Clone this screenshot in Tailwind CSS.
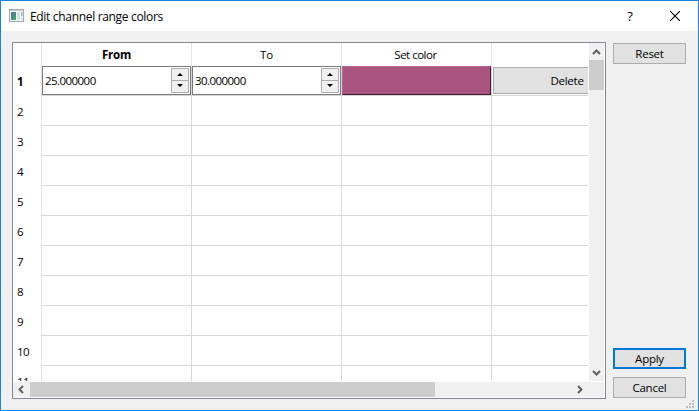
<!DOCTYPE html>
<html lang="en">
<head>
<meta charset="utf-8">
<title>Edit channel range colors</title>
<script src="https://cdn.jsdelivr.net/npm/@tailwindcss/browser@4"></script>
</head>
<body class="overflow-hidden">
<div class="flex h-[411px] w-[699px] flex-col border border-[#1883d7] bg-[#f0f0f0] font-['Open_Sans','Noto_Sans',sans-serif] text-[11.5px] leading-4 tracking-[-0.25px] text-black">
  <header class="flex h-[30px] shrink-0 items-center bg-white pl-2">
    <svg class="-mt-0.5 h-[13px] w-[15px] shrink-0" viewBox="0 0 15 13">
      <defs><linearGradient id="g" x1="0" y1="0" x2="1" y2="1"><stop offset="0" stop-color="#4773a8"/><stop offset="1" stop-color="#50a868"/></linearGradient></defs>
      <rect x=".5" y=".5" width="14" height="12" fill="#f4f4f4" stroke="#a3a9ae"/>
      <path d="M1 1.5h13" stroke="#c5ccd2"/>
      <rect x="2" y="3" width="5" height="8" fill="url(#g)"/>
      <rect x="8" y="3" width="3" height="8" fill="#d3e0e4"/>
      <rect x="12" y="3" width="1.5" height="4" fill="#9bbca9"/>
      <rect x="12" y="8" width="1.5" height="3" fill="#d6dfe6"/>
    </svg>
    <h1 class="ml-1.5 flex-1 pt-px text-[12px] tracking-[-0.32px] whitespace-nowrap">Edit channel range colors</h1>
    <span class="mr-[36px] w-2 pb-px text-center text-[13px] font-medium">?</span>
    <svg class="mr-[18px] h-[10px] w-[10px]" viewBox="0 0 10 10"><path d="M0 0L10 10M10 0L0 10" stroke="#000" stroke-width="1.1"/></svg>
  </header>
  <main class="flex min-h-0 flex-1 pt-[11px] pl-[11px]">
    <section class="flex h-[357px] w-[594px] shrink-0 flex-col border border-[#828790] bg-white">
      <div class="flex h-[338px]">
        <div class="h-[338px] w-[575px] overflow-hidden">
          <table class="w-[629px] table-fixed border-separate border-spacing-0">
            <colgroup><col class="w-[29px]"><col class="w-[150px]"><col class="w-[150px]"><col class="w-[150px]"><col class="w-[150px]"></colgroup>
            <thead>
              <tr class="h-[23px]">
                <th class="border-r border-[#e5e5e5] p-0"></th>
                <th class="border-r border-[#e5e5e5] p-0 font-bold">From</th>
                <th class="border-r border-[#e5e5e5] p-0 font-normal">To</th>
                <th class="border-r border-[#e5e5e5] p-0 pr-1 font-normal tracking-[-0.6px]"><span class="pl-0.5 tracking-[-0.5px]">Set color</span></th>
                <th class="p-0"></th>
              </tr>
            </thead>
            <tbody id="rows">
              <tr class="h-[30px]">
                <th class="border-r border-[#e5e5e5] p-0 pt-0.5 pl-1 text-left font-bold">1</th>
                <td class="border-r border-b border-[#d8d8d8] p-0">
                  <div class="flex h-[29px] items-center border border-[#7a7a7a] pr-px pl-0.5">
                    <span class="flex-1 tracking-[-0.55px]">25.000000</span>
                    <svg class="h-[25px] w-[18px]" viewBox="0 0 18 25"><path d="M.5.5h17v24H.5zM.5 12.5h17" fill="#f0f0f0" stroke="#adadad"/><path d="M6 8L9 5L12 8zM6 16L9 19L12 16z"/></svg>
                  </div>
                </td>
                <td class="border-r border-b border-[#d8d8d8] p-0">
                  <div class="flex h-[29px] items-center border border-[#7a7a7a] pr-px pl-0.5">
                    <span class="flex-1 tracking-[-0.55px]">30.000000</span>
                    <svg class="h-[25px] w-[18px]" viewBox="0 0 18 25"><path d="M.5.5h17v24H.5zM.5 12.5h17" fill="#f0f0f0" stroke="#adadad"/><path d="M6 8L9 5L12 8zM6 16L9 19L12 16z"/></svg>
                  </div>
                </td>
                <td class="border-r border-b border-[#d8d8d8] p-0"><div class="h-[29px] border border-t-[#c55f92] border-r-[#3f1c2f] border-b-[#3f1c2f] border-l-[#c55f92] bg-[#aa557f]"></div></td>
                <td class="border-b border-[#d8d8d8] p-0"><button class="ml-px block h-[27px] w-[148px] border border-[#adadad] bg-[#e1e1e1]">Delete</button></td>
              </tr>
            </tbody>
          </table>
        </div>
        <div class="ml-px flex h-[338px] w-[15px] flex-col bg-[#f0f0f0]">
          <svg class="h-[17px] w-[15px]" viewBox="0 0 15 17"><path d="M4 11L7.5 7.5L11 11" fill="none" stroke="#606060" stroke-width="2"/></svg>
          <div class="h-[30px] bg-[#cdcdcd]"></div>
          <svg class="mt-auto h-[17px] w-[15px]" viewBox="0 0 15 17"><path d="M4 7L7.5 10.5L11 7" fill="none" stroke="#606060" stroke-width="2"/></svg>
        </div>
      </div>
      <div class="mt-px flex h-[15px] w-[591px] bg-[#f0f0f0]">
        <svg class="h-[15px] w-[17px]" viewBox="0 0 17 15"><path d="M10 4L6.5 7.5L10 11" fill="none" stroke="#606060" stroke-width="2"/></svg>
        <div class="w-[405px] bg-[#cdcdcd]"></div>
        <svg class="mr-4 ml-auto h-[15px] w-[17px]" viewBox="0 0 17 15"><path d="M7 4L10.5 7.5L7 11" fill="none" stroke="#606060" stroke-width="2"/></svg>
      </div>
    </section>
    <aside class="ml-[7px] flex h-[356px] w-[73px] flex-col pt-px">
      <button class="h-[21px] border border-[#adadad] bg-[#e1e1e1] leading-[19px]">Reset</button>
      <button class="mt-auto h-[21px] border-2 border-[#0078d7] bg-[#e1e1e1] leading-[17px]">Apply</button>
      <button class="mt-2 h-[21px] border border-[#adadad] bg-[#e1e1e1] leading-[19px]">Cancel</button>
    </aside>
    <svg class="mb-[2px] h-2 w-2 self-end" viewBox="0 0 8 8" fill="#bfbfbf"><path d="M6 0h2v2H6zM3 3h2v2H3zM6 3h2v2H6zM0 6h2v2H0zM3 6h2v2H3zM6 6h2v2H6z"/></svg>
  </main>
</div>
<script>
const rows = document.getElementById('rows');
for (let n = 2; n <= 11; n++) {
  rows.insertAdjacentHTML('beforeend', `<tr class="h-[30px]"><th class="border-r border-[#e5e5e5] p-0 pt-0.5 pl-1 text-left font-normal tracking-[-0.5px]">${n}</th>` +
    '<td class="border-r border-b border-[#d8d8d8] p-0"></td>'.repeat(3) + '<td class="border-b border-[#d8d8d8] p-0"></td></tr>');
}
</script>
</body>
</html>
